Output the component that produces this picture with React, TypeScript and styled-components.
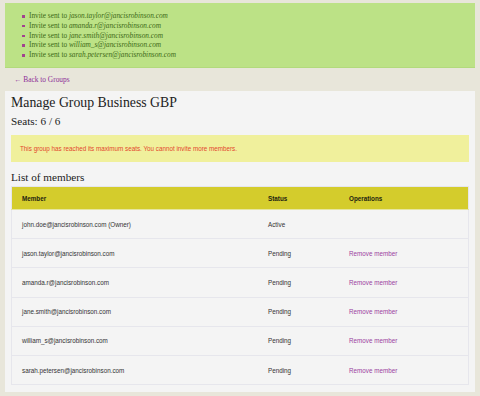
import React from "react";
import styled, { createGlobalStyle } from "styled-components";

const Global = createGlobalStyle`
  html, body {
    margin: 0;
    padding: 0;
    background: #e8e6da;
  }
  body {
    font-family: "Liberation Serif", serif;
  }
`;

const Page = styled.div`
  width: 480px;
  height: 396px;
  padding: 3px 5px 0;
  box-sizing: border-box;
  overflow: hidden;
`;

const Notice = styled.ul`
  margin: 0;
  background: #bce286;
  border-bottom: 1px solid #b2da7c;
  padding: 8px 0 8px 24px;
  height: 65px;
  box-sizing: border-box;
  list-style: none;
`;

const NoticeItem = styled.li`
  position: relative;
  font-family: "Liberation Serif", serif;
  font-size: 7.3px;
  line-height: 9.8px;
  color: #3c6a16;

  &::before {
    content: "";
    position: absolute;
    left: -7px;
    top: 4px;
    width: 2.5px;
    height: 2.5px;
    background: #a2428f;
  }

  em {
    font-style: italic;
  }
`;

const BackLink = styled.a`
  display: block;
  margin: 5px 0 0 9px;
  height: 14px;
  font-family: "Liberation Serif", serif;
  font-size: 7.4px;
  line-height: 14px;
  color: #8d2e98;
  text-decoration: none;
`;

const Panel = styled.section`
  margin-top: 4px;
  background: #f4f4f4;
  padding: 3px 6px 7px;
`;

const Title = styled.h1`
  margin: 0;
  font-family: "Liberation Serif", serif;
  font-weight: normal;
  font-size: 13.8px;
  line-height: 18px;
  color: #222;
`;

const Seats = styled.h2`
  margin: 1px 0 0;
  font-family: "Liberation Serif", serif;
  font-weight: normal;
  font-size: 11.2px;
  line-height: 16px;
  color: #222;
`;

const Warning = styled.div`
  margin-top: 6px;
  background: #f0f09c;
  height: 27px;
  padding: 0 9px;
  display: flex;
  align-items: center;
  font-family: "Liberation Sans", sans-serif;
  font-size: 6.3px;
  color: #e3472c;
`;

const SubTitle = styled.h3`
  margin: 7px 0 0;
  font-family: "Liberation Serif", serif;
  font-weight: normal;
  font-size: 11.2px;
  line-height: 16px;
  color: #222;
`;

const Table = styled.table`
  margin-top: 1px;
  width: 100%;
  border-collapse: collapse;
  border: 1px solid #e6e6ec;
  font-family: "Liberation Sans", sans-serif;
  font-size: 6.3px;
  color: #333;
`;

const Head = styled.th<{ $w?: number }>`
  background: #d4cc2c;
  height: 22px;
  width: ${(p) => (p.$w ? `${p.$w}px` : "auto")};
  padding: 0 0 0 10px;
  text-align: left;
  font-weight: bold;
  color: #1e1e10;
  border-bottom: 1px solid #e6e6a0;
`;

const Cell = styled.td`
  height: 28.2px;
  padding: 0 0 0 10px;
  border-top: 1px solid #e6e6ec;
`;

const Remove = styled.a`
  color: #9b3fa0;
  text-decoration: none;
`;

const invites = [
  "jason.taylor@jancisrobinson.com",
  "amanda.r@jancisrobinson.com",
  "jane.smith@jancisrobinson.com",
  "william_s@jancisrobinson.com",
  "sarah.petersen@jancisrobinson.com",
];

const members = [
  { email: "john.doe@jancisrobinson.com (Owner)", status: "Active", remove: false },
  ...invites.map((email) => ({ email, status: "Pending", remove: true })),
];

export default function App() {
  return (
    <Page>
      <Global />
      <Notice>
        {invites.map((e) => (
          <NoticeItem key={e}>
            Invite sent to <em>{e}</em>
          </NoticeItem>
        ))}
      </Notice>
      <BackLink href="#">← Back to Groups</BackLink>
      <Panel>
        <Title>Manage Group Business GBP</Title>
        <Seats>Seats: 6 / 6</Seats>
        <Warning>This group has reached its maximum seats. You cannot invite more members.</Warning>
        <SubTitle>List of members</SubTitle>
        <Table>
          <thead>
            <tr>
              <Head $w={236}>Member</Head>
              <Head $w={71}>Status</Head>
              <Head>Operations</Head>
            </tr>
          </thead>
          <tbody>
            {members.map((m) => (
              <tr key={m.email}>
                <Cell>{m.email}</Cell>
                <Cell>{m.status}</Cell>
                <Cell>{m.remove && <Remove href="#">Remove member</Remove>}</Cell>
              </tr>
            ))}
          </tbody>
        </Table>
      </Panel>
    </Page>
  );
}
